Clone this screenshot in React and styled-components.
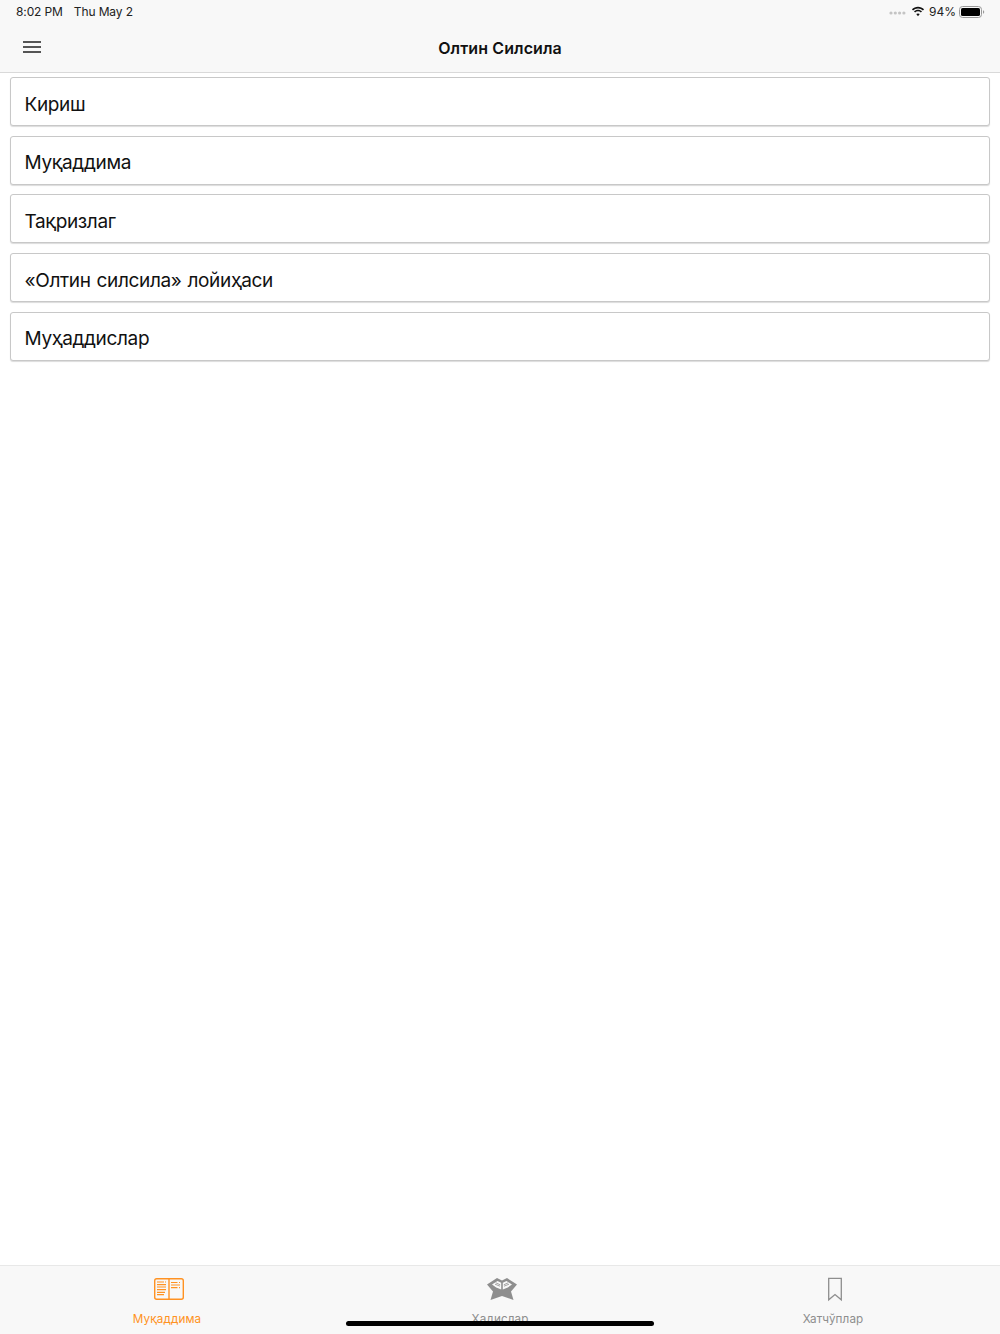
import React from "react";
import styled, { createGlobalStyle } from "styled-components";

const Global = createGlobalStyle`
  html, body { margin: 0; padding: 0; background: #fff; }
  #root { width: 1000px; height: 1334px; }
  * { box-sizing: border-box; }
`;
const Page = styled.div`
  position: relative; width: 1000px; height: 1334px; display: flex; flex-direction: column;
  font-family: Inter, "Liberation Sans", sans-serif; background: #fff; overflow: hidden;
`;
const TopBar = styled.header`
  height: 73px; background: #f8f8f8; border-bottom: 1px solid #d9d9d9; display: flex; flex-direction: column; flex: none;
`;
const StatusBar = styled.div`
  height: 23px; padding: 0 15px 0 16px; display: flex; align-items: center; justify-content: space-between;
  font-size: 12px; color: #222;
`;
const StatusGroup = styled.div`display: flex; align-items: center; gap: ${p => p.$gap || 0}px;`;
const Clock = styled.span`letter-spacing: -.01em;`;
const Percent = styled.span`margin: 0 -2px 0 -1px;`;
const NavBar = styled.div`
  flex: 1; position: relative; display: flex; align-items: center; justify-content: center;
`;
const Title = styled.h1`margin: 0; font-size: 16px; font-weight: 600; letter-spacing: .1px; color: #111;`;
const MenuButton = styled.div`position: absolute; left: 23px; top: 18px; width: 18px; height: 12px; display: flex; flex-direction: column; justify-content: space-between;`;
const MenuLine = styled.span`height: 2px; background: #555;`;
const List = styled.main`flex: 1; padding: 4px 10px 0; display: flex; flex-direction: column; gap: 9.67px;`;
const Row = styled.div`
  height: 49px; border: 1px solid #c8c8c8; border-radius: 3px; background: #fff;
  box-shadow: 0 1px 1px rgba(0,0,0,.14);
  padding: 14.600px 13.500px 0; font-size: 19px; letter-spacing: -.35px; word-spacing: 1px; line-height: 24px; color: #111;
`;
const TabBar = styled.nav`
  flex: none; height: 69px; background: #f8f8f8; border-top: 1px solid #e8e8e8; display: grid; grid-template-columns: 334px 332px 334px;
`;
const Tab = styled.div`
  display: flex; flex-direction: column; align-items: center; padding-top: 10px; font-size: 11.7px;
  color: ${p => p.$active ? "#ff9222" : "#8e8e8e"}; line-height: 16px; letter-spacing: .1px;
`;
const TabIcon = styled.svg`display: block; height: 26px; width: 34px; margin: 0 0 9px 4px;`;
const HomeIndicator = styled.div`position: absolute; left: 346px; bottom: 8px; width: 308px; height: 5px; border-radius: 3px; background: #000;`;
const Battery = styled.svg`display: block;`;

const items = ["Кириш", "Муқаддима", "Тақризлаг", "«Олтин силсила» лойиҳаси", "Муҳаддислар"];

export default function App() {
  return (
    <Page>
      <Global />
      <TopBar>
        <StatusBar>
          <StatusGroup $gap={11}><Clock>8:02 PM</Clock><Clock>Thu May 2</Clock></StatusGroup>
          <StatusGroup $gap={5}>
            <svg width="17" height="6" viewBox="0 0 17 6"><g fill="#c4c4c4"><circle cx="2" cy="4" r="1.6"/><circle cx="6.300" cy="4" r="1.6"/><circle cx="10.600" cy="4" r="1.6"/><circle cx="14.900" cy="4" r="1.6"/></g></svg>
            <svg width="14" height="11" viewBox="0 0 15 11"><path fill="#111" d="M7.500 2.200c2 0 3.900.8 5.300 2.100l1.200-1.200C12.300 1.400 10 .4 7.500.4S2.700 1.400 1 3.100l1.200 1.200c1.400-1.300 3.300-2.100 5.300-2.100zM7.500 5.300c1.200 0 2.200.4 3.100 1.200l1.200-1.300c-1.200-1-2.700-1.700-4.300-1.700s-3.100.7-4.300 1.700l1.200 1.300c.9-.8 1.900-1.200 3.100-1.200zM7.500 7.600c-.8 0-1.400.3-1.900.7l1.900 2.200 1.900-2.200c-.5-.4-1.100-.7-1.900-.7z"/></svg>
            <Percent>94%</Percent>
            <Battery width="26" height="12" viewBox="0 0 26 12"><rect x=".5" y=".5" width="22" height="11" rx="3" fill="none" stroke="#999"/><rect x="2" y="2" width="19" height="8" rx="1.6" fill="#000"/><path d="M24 4.200c.8.3 1.200 1 1.200 1.800s-.4 1.500-1.200 1.800z" fill="#999"/></Battery>
          </StatusGroup>
        </StatusBar>
        <NavBar>
          <MenuButton><MenuLine /><MenuLine /><MenuLine /></MenuButton>
          <Title>Олтин Силсила</Title>
        </NavBar>
      </TopBar>
      <List>
        {items.map(t => <Row key={t}>{t}</Row>)}
      </List>
      <TabBar>
        <Tab $active>
          <TabIcon viewBox="0 0 34 26">
            <rect x="2.700" y="2.700" width="28.600" height="20.600" rx="2" fill="none" stroke="#ff9222" strokeWidth="1.400"/>
            <path d="M17 2.700v20.600" stroke="#ff9222" strokeWidth="1.400"/>
            <path d="M5 6h7M5 8.700h9M5 11h9M5 13.700h9M5 16.300h8M5 18.700h7M19 6.500h6.500M19 9h9M19 11.700h6.500" stroke="#ff9222" strokeWidth="1.200"/>
            <path d="M13 6h2M27 6.500h2M27 11.700h2" stroke="#ff9222" strokeWidth="1.200" strokeDasharray="1 1"/>
          </TabIcon>
          <span>Муқаддима</span>
        </Tab>
        <Tab>
          <TabIcon viewBox="0 0 34 26">
            <path fill="#8e8e8e" d="M2 8.500 12 2l5 2.500L22 2l10 6.500-6 7 2.500 8.500L17 20l-11.500 4L8 15.500z"/>
            <path fill="#f8f8f8" d="M7 8.500 12.500 5l3.700 1.800v6.700l-5-2zM27 8.500 21.500 5l-3.700 1.800v6.700l5-2z"/>
            <path d="M10 8.200l5 2M10.800 6.800l4.400 2M24 8.200l-5 2M23.200 6.800l-4.400 2" stroke="#8e8e8e" strokeWidth=".8"/>
          </TabIcon>
          <span>Ҳадислар</span>
        </Tab>
        <Tab>
          <TabIcon viewBox="0 0 34 26">
            <path d="M10.700 2.300h12.600v21.500l-6.300-5.300-6.300 5.300z" fill="none" stroke="#8e8e8e" strokeWidth="1.300"/>
          </TabIcon>
          <span>Хатчўплар</span>
        </Tab>
      </TabBar>
      <HomeIndicator />
    </Page>
  );
}
